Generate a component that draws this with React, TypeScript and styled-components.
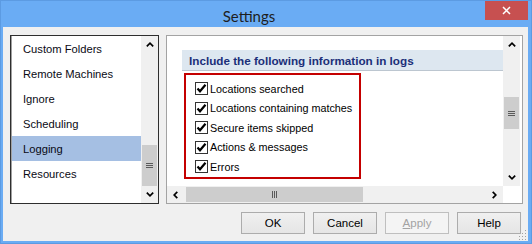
import React from 'react';
import styled, { createGlobalStyle } from 'styled-components';

const Global = createGlobalStyle`
  html, body { margin: 0; padding: 0; background: #ffffff; }
  body { font-family: "Liberation Sans", Arial, sans-serif; }
  * { box-sizing: border-box; }
`;

const Window = styled.div`
  width: 532px;
  height: 244px;
  background: #6aacf4;
  border: 1px solid #5c9be2;
  padding: 0 3px 2px 2px;
  display: flex;
  flex-direction: column;
`;

const TitleBar = styled.div`
  height: 26px;
  display: flex;
  align-items: flex-start;
`;

const Title = styled.div`
  flex: 1;
  text-align: center;
  padding-left: 10px;
  line-height: 30px;
  font-family: Lato, "Liberation Sans", sans-serif;
  font-size: 15px;
  color: #1e1e1e;
`;

const CloseButton = styled.div`
  width: 43px;
  height: 19px;
  background: #c75050;
  display: flex;
  align-items: center;
  justify-content: center;
`;

const Client = styled.div`
  flex: 1;
  background: #f0f0f0;
  padding: 8px 5px 0 7px;
  display: flex;
  flex-direction: column;
  position: relative;
`;

const PanelsRow = styled.div`
  height: 169px;
  display: flex;
  gap: 7px;
`;

const ListBox = styled.div`
  width: 149px;
  height: 169px;
  border: 1px solid #2e2e2e;
  box-shadow: inset 1px 0 0 #a0a0a0;
  background: #fff;
  display: flex;
`;

const Items = styled.div`
  flex: 1;
  padding-left: 1px;
  display: flex;
  flex-direction: column;
`;

const Item = styled.div<{ $selected?: boolean }>`
  height: 25px;
  line-height: 26px;
  padding-left: 11px;
  font-size: 11.2px;
  color: #0a0a14;
  white-space: nowrap;
  background: ${(p) => (p.$selected ? '#a5bfe3' : 'transparent')};
`;

const VScroll = styled.div`
  width: 17px;
  background: #f0f0f0;
  display: flex;
  flex-direction: column;
`;

const HScroll = styled.div`
  height: 17px;
  background: #f0f0f0;
  display: flex;
`;

const ArrowBox = styled.div`
  width: 17px;
  height: 17px;
  flex: none;
  display: flex;
  align-items: center;
  justify-content: center;
`;

const VTrack = styled.div`
  flex: 1;
  display: flex;
  flex-direction: column;
`;

const HTrack = styled.div`
  flex: 1;
  display: flex;
`;

const VThumb = styled.div<{ $offset: number; $size: number }>`
  margin: ${(p) => p.$offset}px 1px 0 1px;
  height: ${(p) => p.$size}px;
  background: #cdcdcd;
  display: flex;
  flex-direction: column;
  align-items: center;
  justify-content: center;
  gap: 1px;
`;

const HThumb = styled.div<{ $offset: number; $size: number }>`
  margin: 1px 0 1px ${(p) => p.$offset}px;
  width: ${(p) => p.$size}px;
  background: #cdcdcd;
  display: flex;
  align-items: center;
  justify-content: center;
  gap: 1px;
`;

const GripH = styled.span`
  width: 7px;
  height: 1px;
  background: #5a5a5a;
`;

const GripV = styled.span`
  width: 1px;
  height: 7px;
  background: #5a5a5a;
`;

const Panel = styled.div`
  width: 357px;
  height: 169px;
  border: 1px solid #a3a3a3;
  background: #fff;
  padding-right: 2px;
  display: grid;
  grid-template-columns: 1fr 17px;
  grid-template-rows: 1fr 17px;
`;

const Content = styled.div`
  overflow: hidden;
  padding: 14px 0 0 15px;
`;

const Section = styled.div`
  width: 420px;
`;

const SectionHeader = styled.div`
  height: 21px;
  line-height: 21px;
  background: #dde7f0;
  border-bottom: 1px solid #bcc6d0;
  padding-left: 7px;
  font-size: 11.7px;
  font-weight: bold;
  color: #1b2f79;
  white-space: nowrap;
`;

const Highlight = styled.div`
  margin: 2px 0 0 2px;
  width: 177px;
  height: 106px;
  border: 2px solid #c40000;
  padding: 4px 0 0 9px;
`;

const CheckRow = styled.label`
  height: 19.5px;
  display: flex;
  align-items: center;
  gap: 2px;
  font-size: 10.8px;
  color: #000;
  white-space: nowrap;
`;

const Box = styled.span`
  width: 13px;
  height: 13px;
  border: 1px solid #333;
  background: #fff;
  display: flex;
  align-items: center;
  justify-content: center;
  flex: none;
`;

const Corner = styled.div`
  background: #fff;
`;

const ButtonsRow = styled.div`
  margin-top: 8px;
  margin-right: 2px;
  display: flex;
  justify-content: flex-end;
  gap: 8px;
`;

const Button = styled.div<{ $disabled?: boolean }>`
  width: 64px;
  height: 22px;
  border: 1px solid ${(p) => (p.$disabled ? '#bfbfbf' : '#acacac')};
  background: ${(p) => (p.$disabled ? '#f4f4f4' : 'linear-gradient(#f0f0f0, #e5e5e5)')};
  color: ${(p) => (p.$disabled ? '#a3a3a3' : '#000')};
  font-size: 11.5px;
  display: flex;
  align-items: center;
  justify-content: center;
`;

const Grip = styled.div`
  position: absolute;
  right: 1px;
  bottom: 1px;
  width: 10px;
  height: 10px;
  display: flex;
`;

const Up = () => (
  <svg width="8" height="5" viewBox="0 0 8 5">
    <polyline points="0.8,4.3 4,1.2 7.2,4.3" fill="none" stroke="#000" strokeWidth="1.7" />
  </svg>
);
const Down = () => (
  <svg width="8" height="5" viewBox="0 0 8 5">
    <polyline points="0.8,0.7 4,3.8 7.2,0.7" fill="none" stroke="#000" strokeWidth="1.7" />
  </svg>
);
const Left = () => (
  <svg width="5" height="8" viewBox="0 0 5 8">
    <polyline points="4.3,0.8 1.2,4 4.3,7.2" fill="none" stroke="#000" strokeWidth="1.7" />
  </svg>
);
const Right = () => (
  <svg width="5" height="8" viewBox="0 0 5 8">
    <polyline points="0.7,0.8 3.8,4 0.7,7.2" fill="none" stroke="#000" strokeWidth="1.7" />
  </svg>
);

const Check = () => (
  <svg width="11" height="11" viewBox="0 0 11 11">
    <polyline points="1.5,5.5 4,8.3 9.5,1.8" fill="none" stroke="#000" strokeWidth="2.2" />
  </svg>
);

const VBar = ({ offset, size }: { offset: number; size: number }) => (
  <VScroll>
    <ArrowBox><Up /></ArrowBox>
    <VTrack>
      <VThumb $offset={offset} $size={size}>
        <GripH /><GripH /><GripH />
      </VThumb>
    </VTrack>
    <ArrowBox><Down /></ArrowBox>
  </VScroll>
);

const items = ['Custom Folders', 'Remote Machines', 'Ignore', 'Scheduling', 'Logging', 'Resources'];
const options = [
  'Locations searched',
  'Locations containing matches',
  'Secure items skipped',
  'Actions & messages',
  'Errors',
];

export default function App() {
  return (
    <>
      <Global />
      <Window>
        <TitleBar>
          <Title>Settings</Title>
          <CloseButton>
            <svg width="9" height="9" viewBox="0 0 9 9">
              <path d="M1 1 L8 8 M8 1 L1 8" stroke="#fff" strokeWidth="1.5" />
            </svg>
          </CloseButton>
        </TitleBar>
        <Client>
          <PanelsRow>
            <ListBox>
              <Items>
                {items.map((t) => (
                  <Item key={t} $selected={t === 'Logging'}>{t}</Item>
                ))}
              </Items>
              <VBar offset={92} size={41} />
            </ListBox>
            <Panel>
              <Content>
                <Section>
                  <SectionHeader>Include the following information in logs</SectionHeader>
                  <Highlight>
                    {options.map((o) => (
                      <CheckRow key={o}>
                        <Box><Check /></Box>
                        {o}
                      </CheckRow>
                    ))}
                  </Highlight>
                </Section>
              </Content>
              <VBar offset={44} size={32} />
              <HScroll>
                <ArrowBox><Left /></ArrowBox>
                <HTrack>
                  <HThumb $offset={2} $size={177}>
                    <GripV /><GripV /><GripV />
                  </HThumb>
                </HTrack>
                <ArrowBox><Right /></ArrowBox>
              </HScroll>
              <Corner />
            </Panel>
          </PanelsRow>
          <ButtonsRow>
            <Button>OK</Button>
            <Button>Cancel</Button>
            <Button $disabled><span><u>A</u>pply</span></Button>
            <Button>Help</Button>
          </ButtonsRow>
          <Grip>
            <svg width="10" height="10" viewBox="0 0 10 10">
              {[[8, 0], [8, 3], [5, 3], [8, 6], [5, 6], [2, 6], [8, 9], [5, 9], [2, 9]].map(([x, y], i) => (
                <rect key={i} x={x} y={y} width="1" height="1" fill="#a0a0a0" />
              ))}
            </svg>
          </Grip>
        </Client>
      </Window>
    </>
  );
}
